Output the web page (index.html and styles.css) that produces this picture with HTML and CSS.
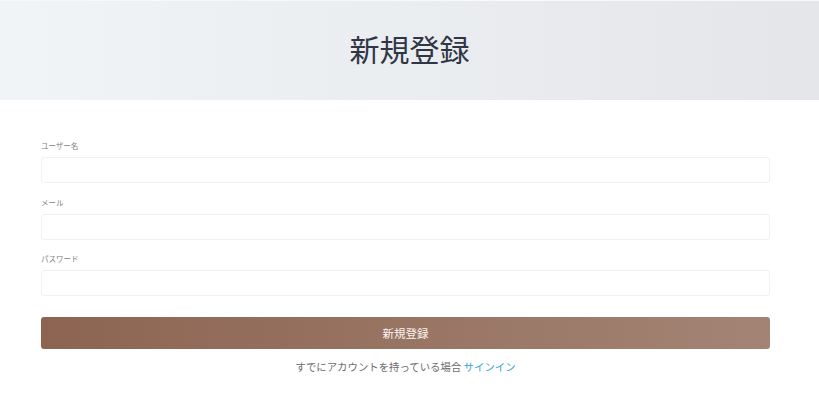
FILE: index.html
```html
<!DOCTYPE html>
<html lang="ja">
<head>
    <meta charset="UTF-8">
    <meta name="viewport" content="width=device-width, initial-scale=1.0">
    <title>新規登録</title>
    <link rel="stylesheet" href="styles.css">
</head>
<body>
    <header class="hero">
        <h1>新規登録</h1>
    </header>
    <form class="signup">
        <div class="field">
            <label for="username">ユーザー名</label>
            <input id="username" type="text">
        </div>
        <div class="field">
            <label for="email">メール</label>
            <input id="email" type="email">
        </div>
        <div class="field">
            <label for="password">パスワード</label>
            <input id="password" type="password">
        </div>
        <button type="submit" class="submit">新規登録</button>
        <p class="signin">すでにアカウントを持っている場合 <a href="#">サインイン</a></p>
    </form>
</body>
</html>
```

FILE: styles.css
```css
body {
    margin: 0;
    font-family: "Noto Sans CJK JP", "Noto Sans", sans-serif;
    background: #ffffff;
    color: #333;
}
.hero {
    height: 100px;
    border-top: 1px solid #f7f8fa;
    box-sizing: border-box;
    background: linear-gradient(90deg, #f1f4f7 0%, #e4e6e9 100%);
    display: flex;
    align-items: center;
    justify-content: center;
    padding-bottom: 6px;
}
.hero h1 {
    margin: 0;
    font-size: 30px;
    font-weight: 400;
    color: #2f3746;
}
.signup {
    padding: 40px 49px 0 41px;
}
.field {
    margin-bottom: 13.5px;
}
.field label {
    display: block;
    font-size: 7.5px;
    line-height: 12px;
    color: #808080;
    margin-bottom: 5px;
}
.field input {
    display: block;
    width: 100%;
    height: 26px;
    box-sizing: border-box;
    border: 1px solid #f1f1f1;
    border-radius: 3px;
    background: #fff;
    outline: none;
}
.submit {
    display: block;
    width: 100%;
    height: 32px;
    margin-top: 21px;
    border: none;
    border-radius: 3px;
    background: linear-gradient(90deg, #8d6452 0%, #a38474 100%);
    color: #fbf5f2;
    font-family: inherit;
    font-size: 11.5px;
    cursor: pointer;
}
.signin {
    margin: 10px 0 0;
    text-align: center;
    font-size: 10.4px;
    line-height: 16px;
    color: #6b6b6b;
}
.signin a {
    color: #2f9fdc;
    text-decoration: none;
}
```
